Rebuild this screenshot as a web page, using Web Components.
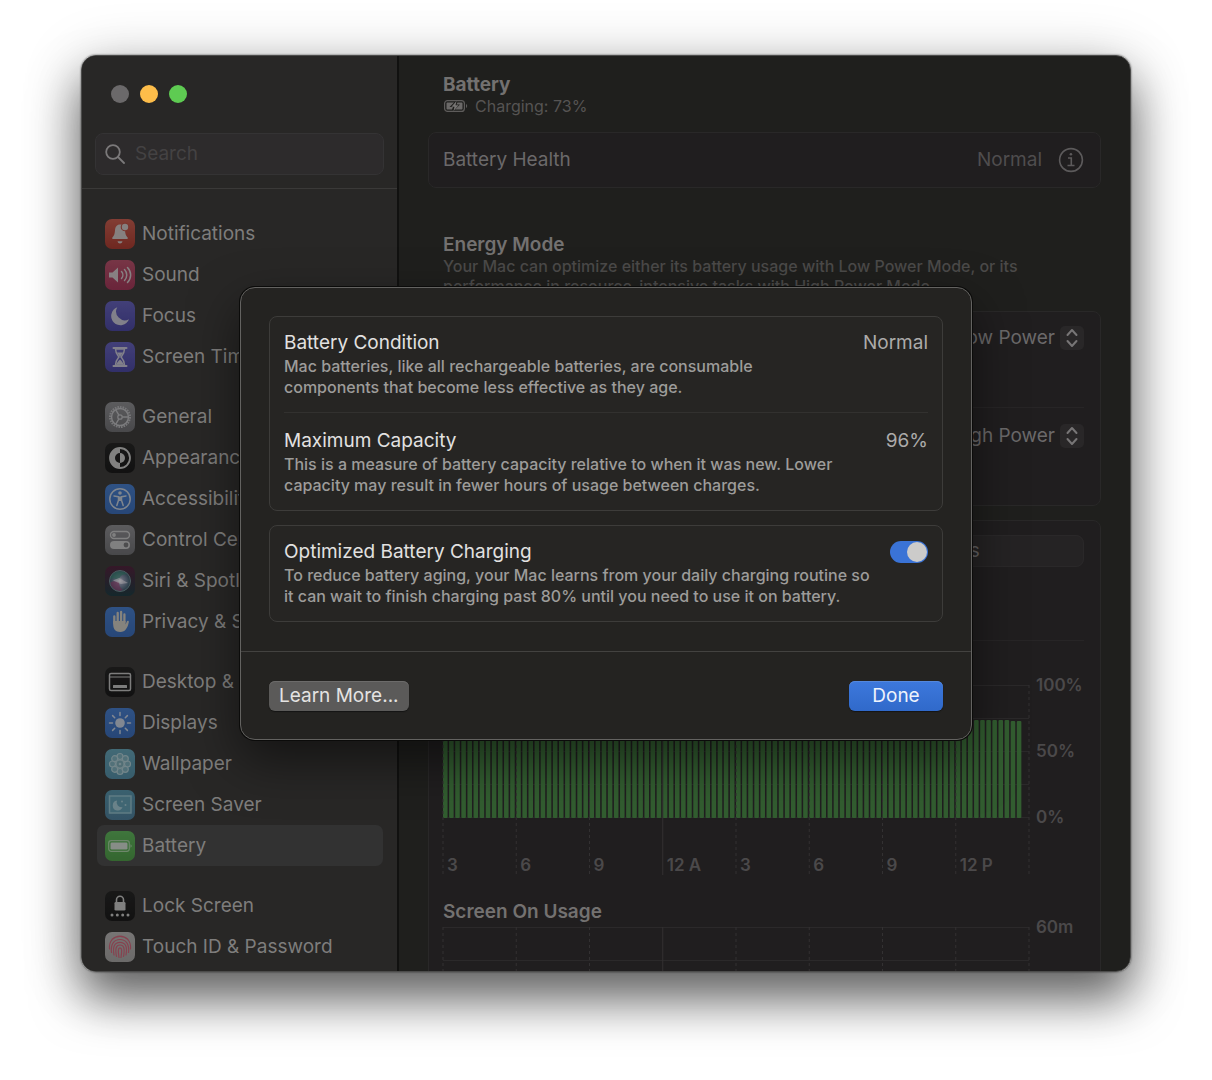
<!DOCTYPE html>
<html lang="en">
<head>
<meta charset="utf-8">
<title>Battery</title>
<style>
  * { box-sizing: border-box; }
  body {
    margin: 0;
    height: 100vh;
    padding: 55px 81px 108px;
    background: #fff;
    font-family: Inter, "Liberation Sans", sans-serif;
    font-size: 19px;
    line-height: 24px;
  }
</style>
</head>
<body>
<mac-window>
  <settings-sidebar slot="sidebar"></settings-sidebar>
  <battery-pane></battery-pane>
  <health-sheet slot="sheet"></health-sheet>
</mac-window>

<script>
const ICONS = {
  notifications: ['#9c4438', '#83281f', `
    <path d="M15 5.500c-3.300 0-4.800 2.600-5 5.800-.2 3.500-.8 5.300-2.600 7.200-.6.700-.2 1.500.6 1.500h14c.8 0 1.200-.8.600-1.500-1.800-1.900-2.400-3.700-2.600-7.200-.2-3.200-1.700-5.800-5-5.800z" fill="#a19a98"/>
    <path d="M12.500 22.300h5c-.4 1.500-1.300 2.200-2.500 2.200s-2.100-.7-2.500-2.200z" fill="#a19a98"/>
    <circle cx="20" cy="8" r="4.300" fill="#913a30"/><circle cx="20" cy="8" r="3.200" fill="#a19a98"/>`],
  sound: ['#8e3a4f', '#7d2440', `
    <path d="M4 12.500h3.500L13 7.500v15l-5.500-5H4z" fill="#a29a9c"/>
    <path d="M16.500 11.500c1.800 2 1.800 5 0 7M19.500 9.500c3 3.200 3 7.800 0 11M22.500 7.500c4.200 4.400 4.200 10.600 0 15" fill="none" stroke="#a29a9c" stroke-width="1.500" stroke-linecap="round"/>`],
  focus: ['#4a4790', '#35327d', `
    <path d="M12.300 6.300A9.200 9.200 0 1 0 24 18.200 8.700 8.700 0 0 1 12.300 6.300z" fill="#9a99a6"/>`],
  time: ['#4a4790', '#35327d', `
    <path d="M8.500 6h13M8.500 24h13" stroke="#9a99a6" stroke-width="2" stroke-linecap="round"/>
    <path d="M10.500 7c0 4 1.500 5.500 3.500 8-2 2.500-3.500 4-3.500 8h9c0-4-1.500-5.500-3.500-8 2-2.500 3.500-4 3.500-8z" fill="none" stroke="#9a99a6" stroke-width="1.500"/>
    <path d="M12 10.500h6L15 15zM11.500 22.500c.4-2.500 2-3.500 3.500-5 1.500 1.500 3.100 2.500 3.500 5z" fill="#9a99a6"/>`],
  general: ['#6b6b6e', '#525255', `
    <circle cx="15" cy="15" r="10" fill="none" stroke="#8d8d90" stroke-width="2" stroke-dasharray="1.600 1"/>
    <circle cx="15" cy="15" r="8.500" fill="none" stroke="#949497" stroke-width="1.500"/>
    <circle cx="15" cy="15" r="2.200" fill="none" stroke="#949497" stroke-width="1.300"/>
    <path d="M17.200 15h6M13.900 13.100 10.800 7.800M13.900 16.900l-3.100 5.300" stroke="#949497" stroke-width="1.400"/>`],
  appearance: ['#151515', '#0c0c0c', `
    <circle cx="15" cy="15" r="10" fill="none" stroke="#9b9b9a" stroke-width="1.800"/>
    <path d="M15 5a10 10 0 0 0 0 20v-5a5 5 0 0 1 0-10z" fill="#9b9b9a"/>
    <path d="M15 10a5 5 0 0 1 0 10z" fill="#9b9b9a"/>`],
  accessibility: ['#315e9f', '#27508f', `
    <circle cx="15" cy="15" r="10.200" fill="none" stroke="#98a0ab" stroke-width="1.500"/>
    <circle cx="15" cy="9" r="1.800" fill="#98a0ab"/>
    <path d="M9 12 13.500 12.800v3.500L11.800 21.500M21 12l-4.500.8v3.500l1.700 5.200" fill="none" stroke="#98a0ab" stroke-width="1.500" stroke-linecap="round" stroke-linejoin="round"/>
    <path d="M13 12.500h4v4.500h-4z" fill="#98a0ab"/>`],
  control: ['#6b6b6e', '#525255', `
    <rect x="5.500" y="6.500" width="19" height="7" rx="3.500" fill="none" stroke="#99999a" stroke-width="1.400"/><circle cx="9" cy="10" r="1.900" fill="#99999a"/>
    <rect x="5" y="16" width="20" height="8" rx="4" fill="#99999a"/><circle cx="21" cy="20" r="2.400" fill="#58585a"/>`],
  siri: ['#3a1429', '#10282e', `
    <defs><radialGradient id="orb"><stop offset="0" stop-color="#c4c1c8"/><stop offset=".35" stop-color="#6d7488"/><stop offset="1" stop-color="#26404f"/></radialGradient></defs>
    <circle cx="15" cy="15" r="10.500" fill="url(#orb)"/>
    <path d="M5 13c2-8 12-10 17-5-6 0-8 4-8 6-3-1-6-2-9-1z" fill="#276b58" opacity=".6"/>
    <path d="M5 17c2 7 9 10 13 7-3-2-4-5-4-8-4-1-7-1-9 1z" fill="#7c2b58" opacity=".6"/>
    <path d="M8 14.500 14 12l9 5-7 1z" fill="#c0bcc3" opacity=".6"/>
    <circle cx="15" cy="15" r="10.500" fill="none" stroke="#556b70"/>`],
  privacy: ['#315e9f', '#27508f', `
    <path d="M9.300 16.500V9.500M12.700 14V6M16.100 14V5M19.400 15V7.500" stroke="#a09d96" stroke-width="2.300" stroke-linecap="round"/>
    <path d="M8.200 14h12.400v3.500l1.200-3c.5-1.200 2.300-.7 2 .7-.6 3-1.500 5.200-2.900 7.100-1.200 1.700-3.100 2.700-5.700 2.700-4.800 0-7-3-7-7.500z" fill="#a09d96"/>`],
  desktop: ['#151515', '#0c0c0c', `
    <rect x="4.500" y="6.500" width="21" height="17" rx="1.500" fill="none" stroke="#969695" stroke-width="1.500"/>
    <path d="M5 10h20" stroke="#969695"/><rect x="8" y="18" width="14" height="3" rx=".6" fill="#969695"/>`],
  displays: ['#315e9f', '#27508f', `
    <circle cx="15" cy="15" r="4.800" fill="#9aa3b0"/>
    <path d="M15 4.500v3M15 22.500v3M4.500 15h3M22.500 15h3M7.600 7.600l2.100 2.100M20.300 20.300l2.100 2.100M7.600 22.400l2.100-2.100M20.300 9.700l2.100-2.100" stroke="#9aa3b0" stroke-width="1.500" stroke-linecap="round"/>`],
  wallpaper: ['#4a7d8d', '#3c6c80', `
    <g fill="#5f8691" stroke="#87a0a6" stroke-width="1.200">
    <circle cx="15" cy="7.500" r="3"/><circle cx="15" cy="22.500" r="3"/><circle cx="7.500" cy="15" r="3"/><circle cx="22.500" cy="15" r="3"/>
    <circle cx="9.700" cy="9.700" r="3"/><circle cx="20.300" cy="20.300" r="3"/><circle cx="9.700" cy="20.300" r="3"/><circle cx="20.300" cy="9.700" r="3"/></g>
    <circle cx="15" cy="15" r="4" fill="#5d838c" stroke="#87a0a6" stroke-width="1.200"/><circle cx="15" cy="15" r="1.300" fill="#87a0a6"/>`],
  saver: ['#3f7184', '#375f76', `
    <rect x="4.500" y="6" width="21.500" height="17" fill="#477889" stroke="#6f949f" stroke-width="1.500"/>
    <path d="M12 10.500a5 5 0 1 0 5.500 6.500 4.800 4.800 0 0 1-5.500-6.500z" fill="#7d9ca5"/>
    <circle cx="17" cy="11.500" r="1" fill="#7d9ca5"/><circle cx="20.500" cy="15" r="1" fill="#7d9ca5"/>`],
  battery: ['#438940', '#35752f', `
    <rect x="3.700" y="9.700" width="20.600" height="10.600" rx="2.500" fill="none" stroke="#7fa07c" stroke-width="1.200"/>
    <rect x="5.500" y="11.500" width="17" height="7" rx="1.200" fill="#a0a79f"/><path d="M25.500 13.300c1.600.4 1.600 3 0 3.400z" fill="#7fa07c"/>`],
  lock: ['#151515', '#0c0c0c', `
    <rect x="9.500" y="11" width="11" height="8.500" rx="1.300" fill="#999998"/>
    <path d="M11.500 11.500V8.700a3.500 3.500 0 0 1 7 0v2.800" fill="none" stroke="#999998" stroke-width="1.600"/>
    <g fill="#999998"><circle cx="7" cy="24" r="1.500"/><circle cx="12.300" cy="24" r="1.500"/><circle cx="17.700" cy="24" r="1.500"/><circle cx="23" cy="24" r="1.500"/></g>`],
  touch: ['#8e8c8b', '#807e7d', `
    <g fill="none" stroke="#a34a5b" stroke-width="1.200" stroke-linecap="round">
    <path d="M7 7.500c4.500-4.600 11.500-4.600 16 0M4.500 17c-.8-9 5-12.500 10.500-12.500S26.300 8 25.500 17M6.500 20.500C5.500 12 9 7.500 15 7.500s9.500 4.500 8.500 13M9 23c-1.500-8.500.5-12.700 6-12.700S22.500 14.500 21 23M11.500 24.500c-1.500-8-.5-11.500 3.500-11.500s5 3.500 3.500 11.500M14 25.500c-1-7-1-9.700 1-9.700s2 2.700 1 9.700"/></g>`],
};

const NAV = [
  [['notifications', 'Notifications'], ['sound', 'Sound'], ['focus', 'Focus'], ['time', 'Screen Time']],
  [['general', 'General'], ['appearance', 'Appearance'], ['accessibility', 'Accessibility'],
   ['control', 'Control Center'], ['siri', 'Siri & Spotlight'], ['privacy', 'Privacy & Security']],
  [['desktop', 'Desktop & Dock'], ['displays', 'Displays'], ['wallpaper', 'Wallpaper'],
   ['saver', 'Screen Saver'], ['battery', 'Battery']],
  [['lock', 'Lock Screen'], ['touch', 'Touch ID & Password']],
];

// small helper: every element below is a style block plus markup
function define(name, render) {
  customElements.define(name, class extends HTMLElement {
    connectedCallback() {
      if (this.shadowRoot) return;
      this.attachShadow({ mode: 'open' });
      this.shadowRoot.innerHTML = '<style>*{box-sizing:border-box}</style>' + render(this);
    }
  });
}

define('mac-window', () => `
  <style>
    :host {
      display: block;
      height: 100%;
      position: relative;
      border-radius: 15px;
      box-shadow: 0 0 2px rgba(0, 0, 0, 0.7), 0 28px 48px rgba(0, 0, 0, 0.54), 0 8px 60px rgba(0, 0, 0, 0.22);
    }
    .frame {
      display: flex;
      height: 100%;
      overflow: hidden;
      border: 1px solid #4c4c4b;
      border-radius: 15px;
      background: #1f1f1d;
    }
    main { flex: 1; min-width: 0; }
    .overlay {
      position: absolute;
      inset: 0;
      display: grid;
      place-items: center;
      overflow: hidden;
      border-radius: 15px;
    }
  </style>
  <div class="frame">
    <slot name="sidebar"></slot>
    <main><slot></slot></main>
  </div>
  <div class="overlay"><slot name="sheet"></slot></div>
`);

define('nav-item', (el) => {
  const [top, bottom, art] = ICONS[el.getAttribute('icon')];
  return `
  <style>
    :host { display: block; }
    a {
      display: flex;
      align-items: center;
      gap: 7px;
      height: 41px;
      padding: 0 8px;
      border-radius: 7px;
      color: #7e7d7c;
      text-decoration: none;
      white-space: nowrap;
    }
    :host([selected]) a { background: #323232; }
    svg { flex: none; border-radius: 7px; background: linear-gradient(${top}, ${bottom}); opacity: 0.78; }
  </style>
  <a href="#${el.getAttribute('icon')}"><svg width="30" height="30" viewBox="0 0 30 30" aria-hidden="true">${art}</svg><slot></slot></a>`;
});

define('settings-sidebar', () => `
  <style>
    :host {
      display: block;
      flex: none;
      width: 317px;
      overflow: hidden;
      background: #282726;
      border-right: 2px solid #111110;
    }
    .lights { display: flex; gap: 11px; padding: 29px 29px 30px; }
    .lights button { width: 18px; height: 18px; padding: 0; border: 0; border-radius: 50%; background: #6b696a; }
    .lights .min { background: #fdbd4a; }
    .lights .max { background: #5ecb52; }
    .search {
      display: flex;
      align-items: center;
      gap: 10px;
      height: 42px;
      margin: 0 13px 13px;
      padding: 0 9px;
      border: 1px solid #343334;
      border-radius: 8px;
      background: #2d2b2c;
    }
    input {
      flex: 1;
      min-width: 0;
      padding: 0;
      border: 0;
      outline: 0;
      background: none;
      color: #7e7d7c;
      font: inherit;
    }
    input::placeholder { color: #444243; opacity: 1; }
    nav { padding: 24px 13px; border-top: 1px solid #3a3938; display: grid; gap: 19px; }
    section { padding: 0 1px 0 2px; }
  </style>
  <div class="lights">
    <button aria-label="Close"></button>
    <button class="min" aria-label="Minimize"></button>
    <button class="max" aria-label="Zoom"></button>
  </div>
  <label class="search">
    <svg width="20" height="20" viewBox="0 0 20 20" fill="none" stroke="#7b797a" stroke-width="1.800" stroke-linecap="round" aria-hidden="true"><circle cx="8" cy="8" r="6.800"/><path d="m13 13 6 6"/></svg>
    <input type="text" placeholder="Search" aria-label="Search">
  </label>
  <nav>${NAV.map((group) => `<section>${group.map(([icon, label]) =>
    `<nav-item icon="${icon}"${icon === 'battery' ? ' selected' : ''}>${label.replace('&', '&amp;')}</nav-item>`).join('')}</section>`).join('')}
  </nav>
`);

define('setting-card', () => `
  <style>
    :host {
      display: block;
      padding: 0 16px 0 14px;
      border: 1px solid var(--card-border, #292828);
      border-radius: 8px;
      background: var(--card, #201e1f);
    }
  </style>
  <slot></slot>
`);

define('setting-row', () => `
  <style>
    :host { display: block; padding: 14px 0; color: var(--title, #6b696a); }
    :host(:not(:first-child)) { padding-top: 16px; border-top: 1px solid var(--divider, #272526); }
    .top { display: flex; justify-content: space-between; height: 24px; }
    .note { min-height: 42px; margin: 1px 0 0; font-size: 16px; font-weight: 500; line-height: 21px; color: var(--note, #4f4d4e); }
    .value { display: flex; align-items: center; margin-left: auto; color: var(--value, #6b696a); }
  </style>
  <div class="top"><slot name="title"></slot><div class="value"><slot name="value"></slot></div></div>
  <p class="note"><slot></slot></p>
`);

define('usage-chart', (el) => {
  const count = Number(el.getAttribute('bars'));
  const step = 100 / 96;
  let bars = '';
  for (let i = 0; i < count; i++) {
    const level = i > 92 ? 97 : 98;
    bars += `<rect x="${i * step}%" y="${133 - level}" width="0.78%" height="${level}" rx="1"/>`;
  }
  let lines = '';
  for (let i = 0; i < 5; i++) lines += `<line x1="0" x2="100%" y1="${i * 33 + 0.5}" y2="${i * 33 + 0.5}"/>`;
  let marks = '';
  for (let i = 0; i < 9; i++) {
    marks += `<line x1="${i * 12.5}%" x2="${i * 12.5}%" y1="0" y2="190"${i === 3 ? '' : ' stroke-dasharray="3 3"'}/>`;
  }
  const hours = el.hasAttribute('hours') ? el.getAttribute('hours').split(',') : [];
  const scale = el.getAttribute('scale').split(',');
  return `
  <style>
    :host {
      display: grid;
      grid-template-columns: 1fr 55px;
      font-size: 17px;
      font-weight: 600;
      color: #4b494a;
    }
    svg { display: block; width: 100%; height: 190px; grid-area: 1 / 1; overflow: visible; }
    .hours { grid-area: 1 / 1; align-self: end; display: grid; grid-template-columns: repeat(8, 1fr); height: 22px; line-height: 24px; }
    .hours span { padding-left: 4px; }
    .scale { grid-area: 1 / 2; margin-top: -33px; padding-left: 7px; line-height: 66px; }
    .scale div { height: 66px; }
  </style>
  <svg aria-hidden="true">
    <g stroke="#2b292a">${lines}</g>
    <g fill="#325d30">${bars}</g>
    <g stroke="#333132">${marks}</g>
  </svg>
  <div class="hours">${hours.map((h) => `<span>${h}</span>`).join('')}</div>
  <div class="scale">${scale.map((s) => `<div>${s}</div>`).join('')}</div>`;
});

const chevrons = `<svg width="24" height="24" viewBox="0 0 24 24" fill="none" stroke="#777576" stroke-width="2" stroke-linecap="round" stroke-linejoin="round" aria-hidden="true"><path d="m7.500 9 4.500-5L16.500 9M7.500 15l4.500 5 4.500-5"/></svg>`;

define('battery-pane', () => `
  <style>
    :host { display: block; padding: 18px 29px 0; color: #6b696a; }
    h1, h2, p { margin: 0; }
    h1, h2 { font-size: 19px; line-height: 22px; font-weight: 600; color: #737170; }
    h1 { font-weight: 700; }
    header, .energy { padding: 0 15px; }
    header p { display: flex; align-items: center; gap: 7px; font-size: 16px; line-height: 20px; color: #565453; }
    .health { margin-top: 16px; }
    .line { display: flex; align-items: center; justify-content: space-between; height: 54px; }
    .line span { display: flex; align-items: center; gap: 16px; color: #4f4d4e; }
    .line button { display: block; padding: 0; border: 0; background: none; }
    .line button svg { display: block; }
    .energy { margin: 46px 0 15px; }
    .energy p { font-size: 16px; font-weight: 500; line-height: 20px; color: #4b4a49; }
    .pop { display: flex; align-items: center; gap: 5px; }
    .pop svg { border-radius: 5px; background: #292728; }
    select {
      appearance: none;
      padding: 0;
      border: 0;
      background: none;
      color: inherit;
      font: inherit;
      text-align-last: right;
    }
    .usage { margin-top: 14px; padding-bottom: 40px; }
    fieldset {
      display: grid;
      grid-template-columns: 1fr 1fr;
      height: 32px;
      margin: 14px 0 73px;
      padding: 0;
      border: 1px solid #2a2829;
      border-radius: 8px;
      background: #252324;
    }
    fieldset label { display: grid; place-items: center; border-radius: 7px; color: #636162; }
    fieldset input { position: absolute; opacity: 0; }
    fieldset label:has(:checked) { background: #343233; }
    .level { padding: 18px 0 4px; border-top: 1px solid #272526; }
    .screen { padding: 26px 0 4px; }
  </style>
  <header>
    <h1>Battery</h1>
    <p><svg width="25" height="14" viewBox="0 0 25 14" aria-hidden="true">
      <rect x="1.600" y="1.600" width="19.800" height="10.800" rx="3" fill="none" stroke="#5e5c5b" stroke-width="1.200"/>
      <path d="M4.500 3.500H11L6.500 8H10l-1 2.500H4.500c-.6 0-1-.4-1-1v-5c0-.6.400-1 1-1zM14.500 3.500h4c.6 0 1 .4 1 1v5c0 .6-.4 1-1 1H12l5-5h-3.500z" fill="#6b6968"/>
      <path d="m13.500 2-5 5.800h3L10.500 12l5-5.800h-3z" fill="#777574"/>
      <path d="M23 5c1.600.5 1.600 3.500 0 4z" fill="#5e5c5b"/></svg>Charging: 73%</p>
  </header>
  <setting-card class="health">
    <div class="line">Battery Health
      <span>Normal
        <button aria-label="Battery health details"><svg width="26" height="26" viewBox="0 0 26 26" fill="none" stroke="#5c5a5b" stroke-width="1.600" aria-hidden="true"><circle cx="13" cy="13" r="11.400"/><path d="M10 11h3.300v7M9.500 18.500h7"/><circle cx="12.900" cy="7.300" r="1.300" fill="#5c5a5b" stroke="none"/></svg></button>
      </span>
    </div>
  </setting-card>
  <div class="energy">
    <h2>Energy Mode</h2>
    <p>Your Mac can optimize either its battery usage with Low Power Mode, or its<br>performance in resource-intensive tasks with High Power Mode.</p>
  </div>
  <setting-card>
    <setting-row>
      <span slot="value" class="pop"><select aria-label="On battery"><option>Low Power</option></select>${chevrons}</span>
    </setting-row>
    <setting-row>
      <span slot="value" class="pop"><select aria-label="On power adapter"><option>High Power</option></select>${chevrons}</span>
    </setting-row>
  </setting-card>
  <setting-card class="usage">
    <fieldset>
      <label><input type="radio" name="range" checked>Last 24 Hours</label>
      <label><input type="radio" name="range">Last 10 Days</label>
    </fieldset>
    <h2 class="level">Battery Level</h2>
    <usage-chart bars="95" scale="100%,50%,0%" hours="3,6,9,12 A,3,6,9,12 P"></usage-chart>
    <h2 class="screen">Screen On Usage</h2>
    <usage-chart bars="0" scale="60m"></usage-chart>
  </setting-card>
`);

define('health-sheet', () => `
  <style>
    :host {
      display: block;
      width: 90%;
      max-width: 732px;
      --card: #262523;
      --card-border: #3d3c3a;
      --divider: #32312f;
      --title: #e2e1e0;
      --value: #acabaa;
      --note: #9d9c9a;
    }
    dialog {
      position: static;
      display: block;
      width: 100%;
      margin: 0;
      padding: 0;
      border: 1px solid #636260;
      border-radius: 15px;
      background: #242321;
      color: inherit;
      box-shadow: 0 0 0 1px #0b0b0a, 0 20px 50px rgba(0, 0, 0, 0.5);
    }
    .cards { display: grid; gap: 14px; padding: 28px 28px 29px; }
    setting-card { padding: 0 14px; }
    .switch { display: block; width: 38px; height: 22px; }
    .switch input {
      appearance: none;
      display: flex;
      justify-content: flex-end;
      width: 38px;
      height: 22px;
      margin: 0;
      padding: 1px;
      border-radius: 11px;
      background: #3a73d6;
    }
    .switch input::before { content: ""; width: 20px; height: 20px; border-radius: 50%; background: #cccbca; }
    footer { display: flex; justify-content: space-between; padding: 29px 28px 28px; border-top: 1px solid #434240; }
    button {
      height: 30px;
      padding: 0 10px;
      border: 0;
      border-radius: 6px;
      background: #5b5a59;
      box-shadow: inset 0 1px #6c6b6a, 0 1px 1px #151514;
      color: #e4e3e2;
      font: inherit;
      line-height: 28px;
    }
    .done { min-width: 94px; background: linear-gradient(#3d78dc, #3069ca); box-shadow: inset 0 1px #5488dd, 0 1px 1px #151514; color: #eef3fc; }
  </style>
  <dialog open aria-label="Battery Health">
    <div class="cards">
      <setting-card>
        <setting-row><span slot="title">Battery Condition</span><span slot="value">Normal</span>Mac batteries, like all rechargeable batteries, are consumable<br>components that become less effective as they age.</setting-row>
        <setting-row><span slot="title">Maximum Capacity</span><span slot="value">96%</span>This is a measure of battery capacity relative to when it was new. Lower<br>capacity may result in fewer hours of usage between charges.</setting-row>
      </setting-card>
      <setting-card>
        <setting-row><label slot="title" for="optimized">Optimized Battery Charging</label><span slot="value" class="switch"><input type="checkbox" id="optimized" checked></span>To reduce battery aging, your Mac learns from your daily charging routine so<br>it can wait to finish charging past 80% until you need to use it on battery.</setting-row>
      </setting-card>
    </div>
    <footer>
      <button type="button">Learn More...</button>
      <button type="button" class="done">Done</button>
    </footer>
  </dialog>
`);
</script>
</body>
</html>
